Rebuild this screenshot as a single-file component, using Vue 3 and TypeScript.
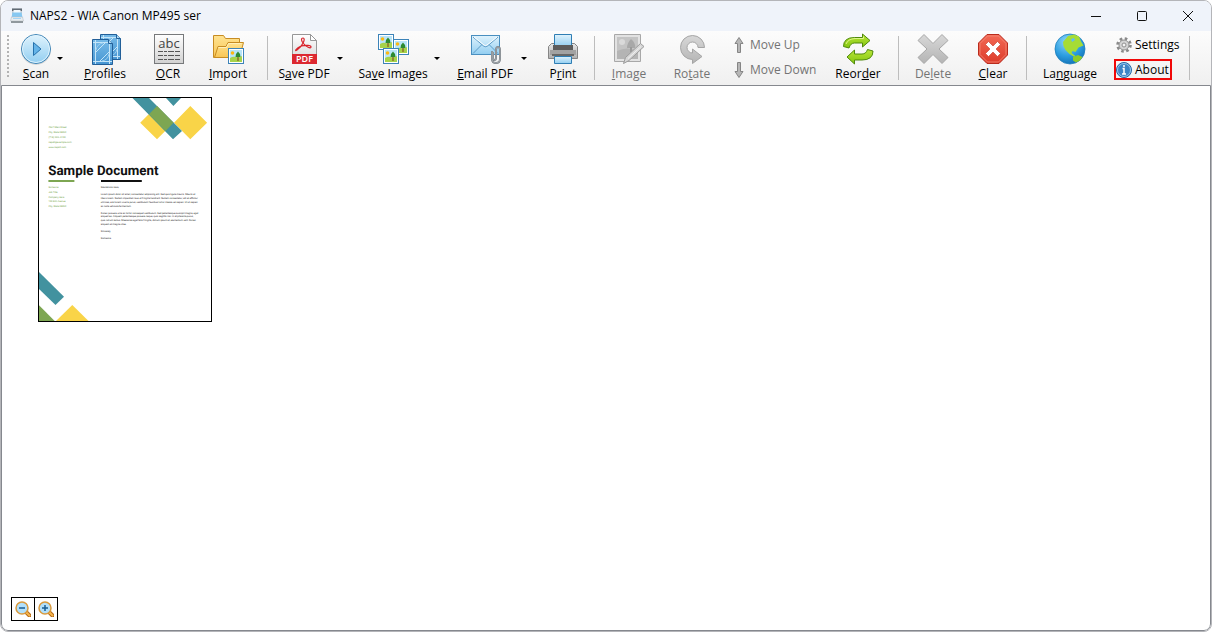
<script setup lang="ts">
interface Line {
  y: number
  text: string
}

const windowTitle = 'NAPS2 - WIA Canon MP495 ser'

const contactLines: Line[] = [
  { y: 310, text: '4567 Main Street' },
  { y: 360, text: 'City, State 98052' },
  { y: 410, text: '(718) 555–0100' },
  { y: 458, text: 'naps2@example.com' },
  { y: 507, text: 'www.naps2.com' },
]

const recipientLines: Line[] = [
  { y: 907, text: 'Someone' },
  { y: 957, text: 'Job Title' },
  { y: 1005, text: 'Company Here' },
  { y: 1054, text: '123 Elm Avenue' },
  { y: 1103, text: 'City, State 98052' },
]

const letterLines: Line[] = [
  { y: 907, text: 'Salutations Here,' },
  { y: 982, text: 'Lorem ipsum dolor sit amet, consectetur adipiscing elit. Sed quis ligula mauris. Mauris et' },
  { y: 1018, text: 'libero lorem. Nullam imperdiet risus et fringilla hendrerit. Nullam consectetur, elit et efficitur' },
  { y: 1056, text: 'ultricies, erat lorem viverra purus, vestibulum faucibus tortor massa vel sapien. Ut ut sapien' },
  { y: 1096, text: 'ac nulla vehicula fermentum.' },
  { y: 1165, text: 'Donec posuere urna ac tortor consequat vestibulum. Sed pellentesque suscipit magna, eget' },
  { y: 1202, text: 'aliquet leo. Aliquam pellentesque posuere neque, quis sagittis nisi. In at pharetra purus,' },
  { y: 1241, text: 'quis rutrum lectus. Maecenas eget felis fringilla, dictum ipsum at, elementum velit. Donec' },
  { y: 1279, text: 'aliquam et magna vitae.' },
  { y: 1350, text: 'Sincerely,' },
  { y: 1420, text: 'Someone' },
]
</script>

<template>
  <div class="window">
    <svg class="defs" aria-hidden="true">
      <defs>
        <linearGradient id="lightBlue" x1="0" y1="0" x2="0" y2="1"><stop offset="0" stop-color="#e0f3fd" /><stop offset="1" stop-color="#92cef1" /></linearGradient>
        <linearGradient id="blue" x1="0" y1="0" x2="0" y2="1"><stop offset="0" stop-color="#77bbe8" /><stop offset="1" stop-color="#4695d2" /></linearGradient>
        <linearGradient id="folder" x1="0" y1="0" x2="0" y2="1"><stop offset="0" stop-color="#ffe391" /><stop offset="1" stop-color="#f8c655" /></linearGradient>
        <linearGradient id="paper" x1="0" y1="0" x2="0" y2="1"><stop offset="0" stop-color="#ffffff" /><stop offset="1" stop-color="#d2d2d2" /></linearGradient>
        <linearGradient id="grey" x1="0" y1="0" x2="0" y2="1"><stop offset="0" stop-color="#d8d8d8" /><stop offset="1" stop-color="#b4b4b4" /></linearGradient>
        <linearGradient id="red" x1="0" y1="0" x2="0" y2="1"><stop offset="0" stop-color="#f36a56" /><stop offset="1" stop-color="#dd3b2a" /></linearGradient>
        <linearGradient id="green" x1="0" y1="0" x2="0" y2="1"><stop offset="0" stop-color="#b9e53a" /><stop offset="1" stop-color="#83c60d" /></linearGradient>
        <linearGradient id="metal" x1="0" y1="0" x2="0" y2="1"><stop offset="0" stop-color="#e8e8e8" /><stop offset="1" stop-color="#b0b0b0" /></linearGradient>
        <radialGradient id="sea" cx="0.4" cy="0.25" r="0.8"><stop offset="0" stop-color="#8ed7fb" /><stop offset="0.6" stop-color="#2c9de0" /><stop offset="1" stop-color="#126fb4" /></radialGradient>
        <g id="photo">
          <rect x="0.5" y="0.5" width="15" height="15" fill="#fff" stroke="#3c83b8" />
          <rect x="2" y="2" width="12" height="9" fill="#b8e4f8" />
          <path d="M2 10q3-2 6-1t6-1v6H2z" fill="#a6d34a" />
          <circle cx="4.500" cy="5" r="1.800" fill="#fdb813" />
          <path d="M10 8v5" stroke="#865520" stroke-width="1.200" />
          <path d="M10 3.500l2 2.500.5 3h-5L8 6z" fill="#2d8a31" />
        </g>
        <g id="sheet">
          <path d="M.5.5h16l4 4v21H.5z" fill="url(#blue)" stroke="#225f98" />
          <path d="M16.500.5v4h4" fill="#a9d8f4" stroke="#225f98" />
          <path d="M3.500 1v24M17.500 5v20M1 3.500h15M1 22.500h19M4 13l9-9M8 22l9-9" fill="none" stroke="#c4e5f8" />
          <path d="M4 11q1-6 7-7M17 15q-1 6-7 7" fill="none" stroke="#9dd0f0" />
        </g>
      </defs>
    </svg>

    <header class="titlebar">
      <svg class="app-icon" viewBox="0 0 16 16" aria-hidden="true">
        <path d="M3 .5h10V8H3z" fill="#c4cbd1" />
        <path d="M3 .5h10V3H3z" fill="#606a74" />
        <path d="M4.500 2h7v4h-7z" fill="#f2f8fc" />
        <path d="M3.500 4.500h9l1 5h-11z" fill="#86c8f2" />
        <path d="M2.500 9h11l1 4h-13z" fill="#e9edf0" stroke="#b8c0c6" stroke-width="0.600" />
        <path d="M2 13h12v2H2z" fill="#90989e" />
        <path d="M4 10h8v1H4z" fill="#a5d5f5" />
      </svg>
      <h1>{{ windowTitle }}</h1>
      <div class="captions">
        <button type="button" aria-label="Minimize"><svg viewBox="0 0 12 12"><path d="M1 6.500h10" /></svg></button>
        <button type="button" aria-label="Maximize"><svg viewBox="0 0 12 12"><rect x="1.500" y="1.500" width="9" height="9" rx="1" /></svg></button>
        <button type="button" aria-label="Close"><svg viewBox="0 0 12 12"><path d="M1 1l10 10M11 1L1 11" /></svg></button>
      </div>
    </header>

    <nav class="toolbar" aria-label="Main">
      <span class="grip"></span>
      <div class="split">
        <button type="button" class="tool small">
          <svg viewBox="0 0 32 32"><circle cx="16" cy="17" r="15" fill="#000" opacity="0.120" /><circle cx="16" cy="16" r="14.500" fill="url(#lightBlue)" stroke="#3f84b5" /><circle cx="16" cy="16" r="13.500" fill="none" stroke="#dff3fd" /><path d="M13.500 9.500v13l7.500-6.500z" fill="#65b4e8" stroke="#2672ad" /></svg>
          <span><u>S</u>can</span>
        </button>
        <button type="button" class="drop" aria-label="Scan options"></button>
      </div>
      <button type="button" class="tool wide-gap">
        <svg viewBox="0 0 32 32"><use href="#sheet" x="11" y="1" /><use href="#sheet" x="3" y="6" /></svg>
        <span><u>P</u>rofiles</span>
      </button>
      <button type="button" class="tool gap">
        <svg viewBox="0 0 32 32">
          <rect x="2.500" y="1.500" width="29" height="29" fill="url(#paper)" stroke="#77797b" />
          <text x="17" y="15" text-anchor="middle" font-size="13" fill="#444">abc</text>
          <path d="M6 18.500h22M6 22.500h22M6 26.500h22" stroke="#555" stroke-dasharray="5 1 3 1 6 1" />
        </svg>
        <span><u>O</u>CR</span>
      </button>
      <button type="button" class="tool">
        <svg viewBox="0 0 32 32">
          <path d="M1.500 24.500v-22h10l2 3h14v16z" fill="url(#folder)" stroke="#c78c22" />
          <path d="M2.500 24.500l3.500-11h8l2-4h15.500l-4 15z" fill="url(#folder)" stroke="#c78c22" />
          <path d="M6.500 14.500h8l2-4h13" fill="none" stroke="#fff0ba" />
          <use href="#photo" x="16" y="15" />
        </svg>
        <span><u>I</u>mport</span>
      </button>
      <span class="separator import-end"></span>

      <div class="split">
        <button type="button" class="tool">
          <svg viewBox="0 0 32 32">
            <path d="M4.500 1.500h18l6 6v23h-24z" fill="url(#paper)" stroke="#979797" />
            <path d="M22.500 1.500v6h6z" fill="#fff" stroke="#979797" />
            <path d="M15 5c3 0 0 8-6 12-3 2-1-2 4-4 5-1 10-1 10 1s-5 0-8-4c-2-3-2-5 0-5z" fill="none" stroke="#d9232b" stroke-width="1.200" />
            <path d="M4 21h25v10H4z" fill="#dc2830" />
            <text x="16.500" y="29" text-anchor="middle" font-size="9" font-weight="600" fill="#fff">PDF</text>
          </svg>
          <span>S<u>a</u>ve PDF</span>
        </button>
        <button type="button" class="drop" aria-label="Save PDF options"></button>
      </div>
      <div class="split wide-gap">
        <button type="button" class="tool large">
          <svg viewBox="0 0 32 32"><use href="#photo" x="1" y="1" /><use href="#photo" x="16" y="6" /><use href="#photo" x="6" y="15" /></svg>
          <span>Sa<u>v</u>e Images</span>
        </button>
        <button type="button" class="drop" aria-label="Save Images options"></button>
      </div>
      <div class="split wide-gap">
        <button type="button" class="tool medium">
          <svg viewBox="0 0 32 32">
            <rect x="2.500" y="2.500" width="28" height="19" fill="url(#lightBlue)" stroke="#4a8fc0" />
            <path d="M4 20.500l9-9M29 20.500l-9-9M4 4l10.500 9q2 1.500 4 0L29 4" fill="none" stroke="#5b9bc7" />
            <path d="M5 4l10 8q1.500 1 3 0l10-8" fill="none" stroke="#fff" />
            <path d="M24 19v6q0 2 1.500 2t1.500-2v-8q0-3 2-3t2 3v9q0 4-4 4t-4-4v-8" fill="none" stroke="#7d8389" stroke-width="2" />
            <path d="M24 19v6q0 2 1.500 2t1.500-2v-8q0-3 2-3t2 3v9q0 4-4 4t-4-4v-8" fill="none" stroke="#b8bdc1" stroke-width="0.600" />
          </svg>
          <span><u>E</u>mail PDF</span>
        </button>
        <button type="button" class="drop" aria-label="Email PDF options"></button>
      </div>
      <button type="button" class="tool gap">
        <svg viewBox="0 0 32 32">
          <path d="M1.500 13.500l3-3h23l3 3v12h-29z" fill="url(#metal)" stroke="#858585" />
          <path d="M7.500 1.500h17v12h-17z" fill="url(#lightBlue)" stroke="#2f7eb4" />
          <path d="M6 12h20v5H6z" fill="#5c5c5c" />
          <path d="M3 17h26v5H3z" fill="#a2a2a2" /><path d="M5 21h22v2H5z" fill="#686868" />
          <path d="M7.500 23.500h17v7h-17z" fill="url(#lightBlue)" stroke="#2f7eb4" />
        </svg>
        <span>P<u>r</u>int</span>
      </button>
      <span class="separator tight"></span>

      <button type="button" class="tool" disabled>
        <svg viewBox="0 0 32 32">
          <path d="M1.500 1.500h26v27h-26z" fill="#e2e2e2" stroke="#a8a8a8" />
          <path d="M4 4h21v22H4z" fill="#c4c4c4" /><circle cx="9" cy="9" r="3" fill="#dadada" />
          <path d="M4 18q10-5 21 0v8H4z" fill="#b4b4b4" /><path d="M18 6q5 4 4 9h-8q0-5 4-9z" fill="#a8a8a8" /><path d="M18 14v5" stroke="#9a9a9a" stroke-width="2" />
          <path d="M10.500 30.500l2-6 15-14 3.500 3-15 14z" fill="#d6d6d6" stroke="#9b9b9b" /><path d="M15 25.500l13-12" stroke="#f0f0f0" />
        </svg>
        <span><u>I</u>mage</span>
      </button>
      <button type="button" class="tool gap" disabled>
        <svg viewBox="0 0 32 32"><path d="M28.500 14.500H22a5.500 5.500 0 1 0-5.500 5.500v-4l9.500 7.500-9.500 7v-4A12 12 0 1 1 28.500 14.500z" fill="url(#grey)" stroke="#a5a5a5" /></svg>
        <span>Ro<u>t</u>ate</span>
      </button>
      <div class="stack moves">
        <button type="button" disabled>
          <svg viewBox="0 0 16 16"><path d="M6.500 15.500v-9h-2.500l4-6 4 6h-2.500v9z" fill="#b7b7b7" stroke="#858585" /></svg><span>Move Up</span>
        </button>
        <button type="button" disabled>
          <svg viewBox="0 0 16 16"><path d="M6.500.5v9h-2.500l4 6 4-6h-2.500v-9z" fill="#b7b7b7" stroke="#858585" /></svg><span>Move Down</span>
        </button>
      </div>
      <button type="button" class="tool wide-gap">
        <svg viewBox="0 0 32 32">
          <path d="M1.500 13.500q0-9 11-9h8v-3.500l7.500 6.500-7.500 6.500v-4h-8q-4 0-5.500 5z" fill="url(#green)" stroke="#508a0c" />
          <path d="M31 18q0 9-11 9h-7.500v4L5 24l7.500-7v4h7.500q4 0 5.500-4.500z" fill="url(#green)" stroke="#508a0c" />
          <path d="M4 11q2-5 9-5.500h8.500v-2" fill="none" stroke="#dff58b" />
        </svg>
        <span>Reor<u>d</u>er</span>
      </button>
      <span class="separator mid"></span>

      <button type="button" class="tool" disabled>
        <svg viewBox="0 0 32 32"><path d="M7 1.500l9 9 9-9 6 6-9 8.500 9 8.500-6 6-9-9-9 9-6-6L10 16 1 7.500z" fill="url(#grey)" stroke="#a6a6a6" /></svg>
        <span>De<u>l</u>ete</span>
      </button>
      <button type="button" class="tool">
        <svg viewBox="0 0 32 32">
          <path d="M10 1.500h12L30.500 10v12L22 30.500H10L1.500 22V10z" fill="url(#red)" stroke="#b92b1c" />
          <path d="M10.500 3h11L29 10.500v11L21.500 29h-11L3 21.500v-11z" fill="none" stroke="#f58a77" stroke-width="0.800" />
          <path d="M11.500 8.500l4.500 4.500 4.500-4.500 3 3L19 16l4.500 4.500-3 3L16 19l-4.500 4.500-3-3L13 16l-4.500-4.500z" fill="#fff" stroke="#c83a28" stroke-width="0.600" />
        </svg>
        <span><u>C</u>lear</span>
      </button>
      <span class="separator clear-end"></span>

      <button type="button" class="tool large">
        <svg viewBox="0 0 32 32">
          <circle cx="16" cy="16" r="15" fill="url(#sea)" stroke="#2080bd" stroke-width="0.800" />
          <path d="M9 9l5-6 6-1.500 5 2 2 5 2.500 4-5 2-3 4.500-3-1-1 2 4 3-1 1-5-3-4-4-2-4z" fill="#a6dc35" />
          <path d="M19 24l5-2 4.500 2-2.500 3.500-4 2-3-2z" fill="#8dcb27" />
          <path d="M17 6l3-1 1 2-3 2z" fill="#63bdec" />
        </svg>
        <span>La<u>n</u>guage</span>
      </button>
      <div class="stack info">
        <button type="button">
          <svg viewBox="0 0 16 16">
            <circle cx="8" cy="8" r="6.500" fill="none" stroke="#8a8a8a" stroke-width="2.600" stroke-dasharray="2.600 2.500" />
            <circle cx="8" cy="8" r="5" fill="#d4d4d4" stroke="#8f8f8f" /><circle cx="8" cy="8" r="2" fill="#f5f5f5" stroke="#8f8f8f" />
          </svg><span>Settings</span>
        </button>
        <button type="button" class="about">
          <svg viewBox="0 0 16 16"><circle cx="8" cy="8" r="7.500" fill="#3e85c6" stroke="#2868a6" /><circle cx="8" cy="8" r="6.500" fill="none" stroke="#9ac7ea" /><path d="M8 3v2M6.500 6.500H8v5M6 12h4" fill="none" stroke="#fff" stroke-width="1.500" /></svg><span>About</span>
        </button>
      </div>
      <span class="separator end"></span>
    </nav>

    <main class="desk">
      <svg class="page" viewBox="0 0 1740 2250" role="img" aria-label="Sample Document page">
        <rect x="5" y="5" width="1730" height="2240" fill="#fff" />
        <path d="M1190 90l165 168-165 165-168-165zM1523 90l168 168-168 165-163-165z" fill="#f9d448" />
        <path d="M945 10h165l330 330-90 83zM1280 10h150l-76 80z" fill="#42929f" />
        <path d="M1190 90l165 168-80 82-165-167z" fill="#7da652" />
        <path d="M10 1750l250 247-85 83-165-160z" fill="#42929f" />
        <path d="M10 2083l157 157H10z" fill="#7da652" />
        <path d="M180 2240l163-160 162 160z" fill="#f9d448" />
        <text class="headline" x="102" y="775">Sample Document</text>
        <path d="M104 830h260v20H104z" fill="#7da652" />
        <path d="M630 830h408v20H630z" fill="#111" />
        <g class="green-text">
          <text v-for="line in contactLines" :key="line.y" x="104" :y="line.y">{{ line.text }}</text>
          <text v-for="line in recipientLines" :key="line.y" x="104" :y="line.y">{{ line.text }}</text>
        </g>
        <g class="letter-text">
          <text v-for="line in letterLines" :key="line.y" x="628" :y="line.y">{{ line.text }}</text>
        </g>
        <rect x="5" y="5" width="1730" height="2240" fill="none" stroke="#000" stroke-width="10" />
      </svg>

      <div class="zoom">
        <button type="button" aria-label="Zoom out">
          <svg viewBox="0 0 16 16"><path d="M11 11l3.500 3.500" stroke="#b66a16" stroke-width="4" stroke-linecap="round" /><path d="M11.500 11.500l3 3" stroke="#f6b64e" stroke-width="2" stroke-linecap="round" /><circle cx="7" cy="7" r="6" fill="#b2e0fb" stroke="#d99a3e" stroke-width="1.500" /><path d="M4 7h6" stroke="#195d93" stroke-width="1.500" /></svg>
        </button>
        <button type="button" aria-label="Zoom in">
          <svg viewBox="0 0 16 16"><path d="M11 11l3.500 3.500" stroke="#b66a16" stroke-width="4" stroke-linecap="round" /><path d="M11.500 11.500l3 3" stroke="#f6b64e" stroke-width="2" stroke-linecap="round" /><circle cx="7" cy="7" r="6" fill="#b2e0fb" stroke="#d99a3e" stroke-width="1.500" /><path d="M4 7h6M7 4v6" stroke="#195d93" stroke-width="1.500" /></svg>
        </button>
      </div>
    </main>
  </div>
</template>

<style>
html, body { margin: 0; background: #fff; }
</style>

<style scoped>
.window {
  box-sizing: border-box;
  min-height: 100vh;
  display: flex;
  flex-direction: column;
  border: 1px solid #b4b5b9;
  border-radius: 8px;
  overflow: hidden;
  background: #fff;
  color: #000;
  font-family: "Open Sans", "Noto Sans", sans-serif;
  font-size: 12px;
  line-height: 16px;
}
.defs { position: absolute; width: 0; height: 0; }
button {
  font: inherit;
  color: inherit;
  background: none;
  border: 0;
  padding: 0;
  margin: 0;
}
button:disabled { color: #747474; }
svg { display: block; flex: none; }
u { text-underline-offset: 1px; text-decoration-skip-ink: none; }

.titlebar {
  display: flex;
  align-items: center;
  height: 30px;
  padding-left: 8px;
  background: #eff3fa;
}
.app-icon { width: 16px; height: 16px; }
h1 { flex: 1; margin: 0 0 0 5px; font-size: 12px; font-weight: 400; }
.captions { display: flex; }
.captions button { display: grid; place-items: center; width: 46px; height: 30px; }
.captions svg { width: 12px; height: 12px; fill: none; stroke: #111; }

.toolbar {
  display: flex;
  height: 54px;
  padding-left: 1px;
  background: linear-gradient(#fcfcfc, #f0f0f0);
  white-space: nowrap;
}
.grip {
  flex: none;
  width: 2px;
  height: 44px;
  margin: 4px 9px 0 5px;
  background: repeating-linear-gradient(#b3b3b3 0 2px, transparent 2px 4px);
}
.tool {
  flex: none;
  display: flex;
  flex-direction: column;
  align-items: center;
  gap: 1px;
  width: 60px;
  padding-top: 2px;
}
.tool > svg { width: 32px; height: 32px; }
.tool.small { width: 36px; }
.tool.medium { width: 66px; }
.tool.large { width: 76px; }
.gap { margin-left: 3px; }
.wide-gap { margin-left: 9px; }
.split { display: flex; flex: none; }
.drop { display: grid; place-items: center; width: 12px; }
.drop::before {
  content: "";
  border: 3px solid transparent;
  border-top-color: #000;
  border-bottom: 0;
}
.separator {
  flex: none;
  width: 1px;
  height: 44px;
  margin: 5px 6px 0;
  background: #bdbdbd;
}
.separator.import-end { margin-left: 9px; }
.separator.tight { margin-left: 1px; margin-right: 4px; }
.separator.mid { margin-left: 10px; margin-right: 4px; }
.separator.clear-end { margin-left: 3px; margin-right: 5px; }
.separator.end { margin: 5px 0 0 17px; }
.stack { display: flex; flex: none; flex-direction: column; gap: 4px; padding-top: 3px; }
.stack button { display: flex; align-items: center; gap: 3px; height: 21px; }
.stack svg { width: 16px; height: 16px; }
.moves { width: 88px; margin-left: 9px; }
.info { width: 58px; margin-left: 6px; }
.info button { padding-left: 2px; }
.info .about { padding-left: 0; border: 2px solid #f00808; box-sizing: border-box; }

.desk {
  flex: 1;
  display: flex;
  flex-direction: column;
  justify-content: space-between;
  align-items: flex-start;
  padding: 11px 9px 9px;
  border: 1px solid #85888e;
  border-radius: 0 0 7px 7px;
}
.page { width: 174px; height: 225px; margin-left: 27px; }
.page text { text-rendering: geometricPrecision; }
.headline { font-family: Roboto, "Liberation Sans", sans-serif; font-size: 134px; font-weight: 700; fill: #111; }
.green-text, .letter-text { font-family: Roboto, "Liberation Sans", sans-serif; font-size: 24px; }
.green-text { fill: #6f9f43; }
.letter-text { fill: #222; }
.zoom { display: flex; }
.zoom button { box-sizing: border-box; display: grid; place-items: center; width: 24px; height: 24px; border: 1px solid #000; }
.zoom button + button { margin-left: -1px; }
.zoom svg { width: 16px; height: 16px; }
</style>
